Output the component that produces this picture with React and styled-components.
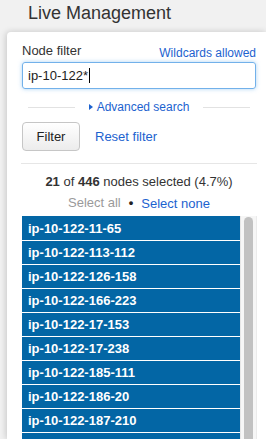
import React from 'react';
import styled, { createGlobalStyle } from 'styled-components';

const blue = '#1c62cf';
const rowBlue = '#0366a5';
const text = '#333';

const GlobalStyle = createGlobalStyle`
  html, body {
    margin: 0;
    padding: 0;
    background: #f1f1f1;
    overflow: hidden;
  }
  body {
    font-family: "Liberation Sans", Arial, sans-serif;
    color: ${text};
  }
`;

const Page = styled.div`
  width: 266px;
  height: 439px;
  padding-left: 7px;
  box-sizing: border-box;
  overflow: hidden;
`;

const Title = styled.h1`
  margin: 0;
  height: 32px;
  padding-left: 21px;
  font-size: 18px;
  font-weight: normal;
  line-height: 26px;
  color: ${text};
`;

const Panel = styled.div`
  width: 259px;
  height: 407px;
  box-sizing: border-box;
  padding: 10px 2px 0 15px;
  background: #fff;
  border-radius: 4px 0 0 0;
  box-shadow: -1px 0 6px rgba(0, 0, 0, 0.18);
  display: flex;
  flex-direction: column;
  overflow: hidden;
`;

const LabelRow = styled.div`
  display: flex;
  justify-content: space-between;
  width: 234px;
  height: 20px;
`;

const Label = styled.label`
  font-size: 13px;
  line-height: 17px;
`;

const Link = styled.a`
  color: ${blue};
  font-size: ${(p) => p.$size || 13}px;
  line-height: 17px;
  padding-top: ${(p) => p.$offset || 0}px;
  text-decoration: none;
  cursor: pointer;
`;

const InputBox = styled.div`
  height: 27px;
  width: 234px;
  box-sizing: border-box;
  border: 1px solid #72b1ea;
  border-radius: 3px;
  box-shadow: 0 0 4px rgba(102, 175, 233, 0.55);
  padding-left: 5px;
  font-size: 13px;
  line-height: 25px;
  color: #222;
  display: flex;
  align-items: center;
`;

const Caret = styled.span`
  display: inline-block;
  width: 1px;
  height: 15px;
  background: #000;
  margin-left: 1px;
`;

const AdvancedRow = styled.div`
  display: flex;
  align-items: center;
  gap: 14px;
  width: 222px;
  height: 16px;
  margin-top: 10px;
  padding: 0 6px;
`;

const Rule = styled.span`
  flex: 1;
  height: 1px;
  background: #e2e2e2;
`;

const AdvancedLink = styled.a`
  display: flex;
  align-items: center;
  gap: 4px;
  color: ${blue};
  font-size: 12px;
  line-height: 16px;
  cursor: pointer;
`;

const Triangle = styled.span`
  width: 0;
  height: 0;
  border-left: 4px solid ${blue};
  border-top: 3.5px solid transparent;
  border-bottom: 3.5px solid transparent;
`;

const ButtonRow = styled.div`
  display: flex;
  align-items: center;
  gap: 15px;
  margin-top: 7px;
`;

const Button = styled.button`
  width: 58px;
  height: 29px;
  font-family: inherit;
  font-size: 13px;
  color: #222;
  background: linear-gradient(#ffffff, #ececec);
  border: 1px solid #c6c6c6;
  border-radius: 4px;
  padding: 0;
`;

const Divider = styled.hr`
  margin: 12px 0 0 -1px;
  border: 0;
  height: 1px;
  background: #e6e6e6;
  width: 236px;
`;

const Count = styled.div`
  margin-top: 9px;
  text-align: center;
  font-size: 13px;
  line-height: 18px;
  width: 234px;

  b {
    font-weight: bold;
  }
`;

const SelectRow = styled.div`
  margin-top: 3px;
  width: 234px;
  display: flex;
  justify-content: center;
  align-items: center;
  gap: 8px;
  font-size: 13px;
  line-height: 18px;
`;

const Muted = styled.span`
  color: #9a9a9a;
`;

const Bullet = styled.span`
  color: #222;
  font-weight: bold;
`;

const ListFrame = styled.div`
  margin-top: 4px;
  width: 235px;
  flex: 1;
  min-height: 0;
  display: flex;
  overflow: hidden;
`;

const List = styled.ul`
  list-style: none;
  margin: 0;
  padding: 1px 0 0;
  flex: 1;
  overflow: hidden;
  background: ${rowBlue};
`;

const Row = styled.li`
  height: 23px;
  border-bottom: 1px solid #fff;
  padding-left: 6px;
  background: ${rowBlue};
  color: #fff;
  font-size: 13px;
  font-weight: bold;
  line-height: 23px;
  white-space: nowrap;
`;

const ScrollTrack = styled.div`
  width: 15px;
  flex-shrink: 0;
  background: #f6f6f6;
  border-left: 1px solid #e6e6e6;
  border-right: 1px solid #ebebeb;
  padding: 1px 3px 0 3px;
  box-sizing: border-box;
  width: 17px;
`;

const Thumb = styled.div`
  width: 9px;
  height: 300px;
  background: #c1c1c1;
  border-radius: 5px;
`;

const nodes = [
  'ip-10-122-11-65',
  'ip-10-122-113-112',
  'ip-10-122-126-158',
  'ip-10-122-166-223',
  'ip-10-122-17-153',
  'ip-10-122-17-238',
  'ip-10-122-185-111',
  'ip-10-122-186-20',
  'ip-10-122-187-210',
  'ip-10-122-190-14',
];

const App = () => (
  <Page>
    <GlobalStyle />
    <Title>Live Management</Title>
    <Panel>
      <LabelRow>
        <Label>Node filter</Label>
        <Link $size={12} $offset={3}>Wildcards allowed</Link>
      </LabelRow>
      <InputBox>
        ip-10-122*
        <Caret />
      </InputBox>
      <AdvancedRow>
        <Rule />
        <AdvancedLink>
          <Triangle />
          Advanced search
        </AdvancedLink>
        <Rule />
      </AdvancedRow>
      <ButtonRow>
        <Button>Filter</Button>
        <Link>Reset filter</Link>
      </ButtonRow>
      <Divider />
      <Count>
        <b>21</b> of <b>446</b> nodes selected (4.7%)
      </Count>
      <SelectRow>
        <Muted>Select all</Muted>
        <Bullet>•</Bullet>
        <Link>Select none</Link>
      </SelectRow>
      <ListFrame>
        <List>
          {nodes.map((n) => (
            <Row key={n}>{n}</Row>
          ))}
        </List>
        <ScrollTrack>
          <Thumb />
        </ScrollTrack>
      </ListFrame>
    </Panel>
  </Page>
);

export default App;
